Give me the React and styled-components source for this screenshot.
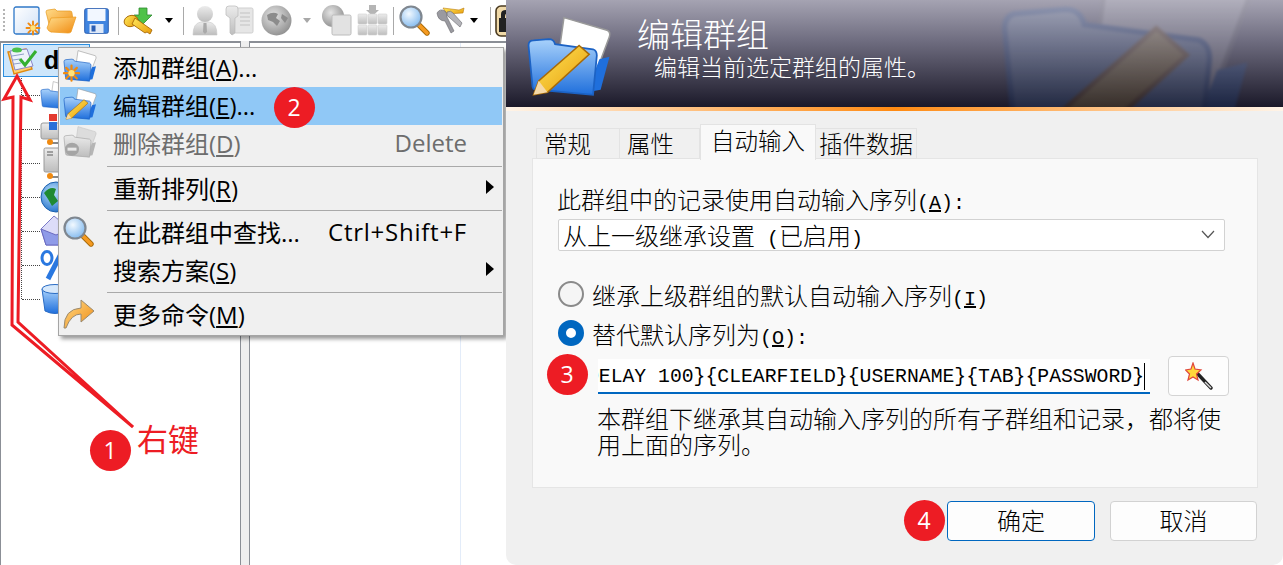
import React from "react";
import styled, { createGlobalStyle } from "styled-components";

const GlobalStyle = createGlobalStyle`
  html, body {
    margin: 0;
    padding: 0;
    background: #fff;
  }
  * {
    box-sizing: border-box;
  }
`;

const Page = styled.div`
  position: relative;
  display: flex;
  width: 1283px;
  height: 565px;
  overflow: hidden;
  background: #fff;
  font-family: "Noto Sans CJK SC", sans-serif;
  color: #000;
`;

/* left: main window */
const MainWindow = styled.div`
  position: relative;
  display: flex;
  flex-direction: column;
  width: 506px;
  flex: none;
  overflow: hidden;
`;

const Toolbar = styled.div`
  display: flex;
  align-items: center;
  height: 41px;
  flex: none;
  padding-left: 3px;
  background: #fff;
`;

const Grip = styled.div`
  width: 4px;
  height: 24px;
  background: repeating-linear-gradient(to bottom, #b5b5b5 0 2px, transparent 2px 4px);
`;

const ToolSlot = styled.div`
  display: flex;
  flex: none;
  margin-left: ${(p) => p.$gap}px;
`;

const ToolSep = styled.div`
  width: 1px;
  height: 28px;
  flex: none;
  margin-left: ${(p) => p.$gap}px;
  background: #a9a9a9;
`;

const DropTri = styled.div`
  flex: none;
  width: 0;
  height: 0;
  margin-left: ${(p) => p.$gap}px;
  border-left: 4.5px solid transparent;
  border-right: 4.5px solid transparent;
  border-top: 5px solid ${(p) => (p.$off ? "#a8a8a8" : "#000")};
`;

const Panes = styled.div`
  display: flex;
  flex: 1;
  min-height: 0;
`;

const TreePane = styled.div`
  width: 241px;
  flex: none;
  border-top: 2px solid #8b8f96;
  border-left: 1px solid #8b8f96;
  border-right: 1px solid #8b8f96;
  padding: 1px 0 0 2px;
  background: #fff;
`;

const Splitter = styled.div`
  width: 8px;
  flex: none;
  background: #efefef;
`;

const ListPane = styled.div`
  flex: 1;
  display: flex;
  border-top: 2px solid #8b8f96;
  border-left: 1px solid #8b8f96;
  background: #fff;
`;

const ListColumn = styled.div`
  width: 211px;
  flex: none;
  border-right: 1px solid #e3ecf9;
`;

const RootRow = styled.div`
  display: flex;
  align-items: center;
  gap: 6px;
  width: 87px;
  height: 33px;
  padding-left: 2px;
  border: 1px solid #2d8fe0;
  background: #cde6fb;
  font-size: 25px;
  font-weight: 700;
  font-family: "Liberation Sans", sans-serif;
`;

const TreeList = styled.div`
  height: 221px;
  margin: 1px 0 0 18px;
  border-left: 1px dotted #444;
`;

const TreeRow = styled.div`
  display: flex;
  align-items: center;
  height: 34px;
  &::before {
    content: "";
    width: 18px;
    flex: none;
    border-top: 1px dotted #444;
  }
`;

/* context menu */
const Menu = styled.div`
  position: absolute;
  left: 58px;
  top: 47px;
  width: 446px;
  padding: 1px;
  border: 1px solid #a5a5a5;
  background: #f0f0f0;
  box-shadow: 3px 3px 4px rgba(0, 0, 0, 0.4);
  font-family: "Open Sans", "Noto Sans CJK SC", sans-serif;
  font-size: 24px;
`;

const MenuRow = styled.div`
  display: flex;
  align-items: center;
  height: 38px;
  padding: 0 8px 4px 3px;
  background: ${(p) => (p.$active ? "#90c8f6" : "transparent")};
  color: ${(p) => (p.$off ? "#6d6d6d" : "#000")};
`;

const MenuIcon = styled.div`
  display: flex;
  width: 50px;
  flex: none;
`;

const MenuLabel = styled.span`
  flex: 1;
  white-space: nowrap;
`;

const Shortcut = styled.span`
  margin-right: 27px;
  letter-spacing: ${(p) => (p.$wide ? 0.75 : 0)}px;
  white-space: nowrap;
`;

const SubArrow = styled.span`
  width: 0;
  height: 0;
  border-top: 7px solid transparent;
  border-bottom: 7px solid transparent;
  border-left: 8px solid #000;
`;

const MenuSep = styled.div`
  height: 1px;
  margin: ${(p) => p.$top}px 0 ${(p) => p.$bottom}px 47px;
  background: #a9a9a9;
`;

/* annotations */
const Annotation = styled.svg`
  position: absolute;
  left: 0;
  top: 0;
  pointer-events: none;
`;

const Badge = styled.div`
  position: absolute;
  left: ${(p) => p.$x - 20.5}px;
  top: ${(p) => p.$y - 20.5}px;
  width: 41px;
  height: 41px;
  display: flex;
  align-items: center;
  justify-content: center;
  border-radius: 50%;
  background: #ed1c24;
  color: #fff;
  font-family: "Open Sans", sans-serif;
  font-size: 23px;
`;

const RedNote = styled.div`
  position: absolute;
  left: 137px;
  top: 416px;
  color: #ed1c24;
  font-size: 31px;
  line-height: 44px;
`;

/* right: dialog */
const Dialog = styled.div`
  display: flex;
  flex-direction: column;
  flex: 1;
  overflow: hidden;
  border-radius: 0 0 10px 10px;
  background: #f0f0f0;
  font-size: 24px;
  font-weight: 300;
`;

const Banner = styled.div`
  position: relative;
  display: flex;
  height: 107px;
  flex: none;
  overflow: hidden;
  padding: 16px 0 0 20px;
  background: linear-gradient(to bottom, #a5a3b2 0%, #6f6d80 38%, #1b1929 100%);
  color: #fff;
`;

const BannerGhost = styled.div`
  position: absolute;
  left: 491px;
  top: -60px;
  opacity: 0.13;
  filter: blur(1.5px);
`;

const BannerText = styled.div`
  position: relative;
  margin-left: 25px;
`;

const BannerTitle = styled.div`
  font-size: 33px;
  line-height: 34px;
`;

const BannerSub = styled.div`
  margin-left: 17px;
  font-size: 23px;
  line-height: 32px;
`;

const GlowLine = styled.div`
  height: 4px;
  flex: none;
  background: linear-gradient(to right, #fff4e8 0%, #ff8a12 50%, #fff4e8 100%);
`;

const DialogBody = styled.div`
  display: flex;
  flex-direction: column;
  padding: 13px 25px 0 26px;
`;

const TabStrip = styled.div`
  position: relative;
  display: flex;
  align-items: flex-end;
  height: 35px;
  padding-left: 4px;
  margin-bottom: -1px;
  font-size: 23.5px;
  z-index: 1;
`;

const Tab = styled.div`
  width: ${(p) => p.$w}px;
  height: ${(p) => (p.$active ? 36 : 31)}px;
  flex: none;
  padding-left: ${(p) => p.$pad}px;
  border: 1px solid #e3e3e3;
  border-bottom: ${(p) => (p.$active ? "none" : "1px solid #e3e3e3")};
  border-left: ${(p) => (p.$first || p.$active ? "1px solid #e3e3e3" : "none")};
  background: ${(p) => (p.$active ? "#f9f9f9" : "#f0f0f0")};
  margin-bottom: ${(p) => (p.$active ? -1 : 0)}px;
  line-height: ${(p) => (p.$active ? 30 : 28)}px;
  white-space: nowrap;
`;

const TabPanel = styled.div`
  height: 330px;
  padding: 28px 0 0 24px;
  border: 1px solid #e5e5e5;
  background: #f9f9f9;
`;

const Half = styled.span`
  font-family: "Liberation Mono", monospace;
  font-size: 20px;
  line-height: 1;
`;

const FieldLabel = styled.div`
  height: 26px;
  line-height: 24px;
  white-space: nowrap;
`;

const Select = styled.div`
  display: flex;
  align-items: center;
  justify-content: space-between;
  width: 667px;
  height: 32px;
  margin: 6px 0 0 1px;
  padding: 0 9px 2px 4px;
  border: 1px solid #d2d2d2;
  border-radius: 2px;
  background: #fff;
  white-space: nowrap;
`;

const RadioRow = styled.div`
  display: flex;
  align-items: center;
  gap: 8px;
  height: 26px;
  margin: ${(p) => p.$top}px 0 0 1px;
  white-space: nowrap;
`;

const Radio = styled.span`
  width: 26px;
  height: 26px;
  flex: none;
  border-radius: 50%;
  border: ${(p) => (p.$on ? "8px solid #0067c0" : "2px solid #8a8a8a")};
  background: ${(p) => (p.$on ? "#fff" : "#f5f5f5")};
`;

const SequenceRow = styled.div`
  display: flex;
  align-items: center;
  gap: 18px;
  margin: 10px 0 0 41px;
`;

const SequenceInput = styled.div`
  display: flex;
  justify-content: flex-end;
  align-items: center;
  width: 552px;
  height: 35px;
  overflow: hidden;
  padding: 3px 5px 0 0;
  border-bottom: 2px solid #0067c0;
  background: #fff;
  font-family: "Liberation Mono", monospace;
  font-size: 19.75px;
  font-weight: 400;
  white-space: nowrap;
`;

const Caret = styled.span`
  width: 1px;
  height: 27px;
  flex: none;
  background: #000;
`;

const WandButton = styled.div`
  display: flex;
  align-items: center;
  justify-content: center;
  width: 61px;
  height: 40px;
  border: 1px solid #d4d4d4;
  border-radius: 4px;
  background: #fdfdfd;
`;

const Description = styled.div`
  width: 636px;
  margin: 9px 0 0 40px;
  line-height: 26px;
`;

const Footer = styled.div`
  display: flex;
  justify-content: flex-end;
  gap: 15px;
  padding: 13px 1px 0 0;
`;

const Button = styled.div`
  display: flex;
  align-items: center;
  justify-content: center;
  width: ${(p) => p.$w}px;
  height: 40px;
  padding-bottom: 3px;
  border: 1px solid ${(p) => (p.$primary ? "#0067c0" : "#d2d2d2")};
  border-radius: 4px;
  background: #fdfdfd;
`;

/* drawings */
const Gradients = () => (
  <svg width="0" height="0" style={{ position: "absolute" }} aria-hidden>
    <defs>
      <linearGradient id="blue" x1="0" y1="0" x2="0" y2="1">
        <stop offset="0" stopColor="#a9d2fb" />
        <stop offset="1" stopColor="#1f6fdc" />
      </linearGradient>
      <linearGradient id="orange" x1="0" y1="0" x2="1" y2="1">
        <stop offset="0" stopColor="#ffdc8a" />
        <stop offset="1" stopColor="#f08a10" />
      </linearGradient>
      <linearGradient id="gold" x1="0" y1="0" x2="1" y2="1">
        <stop offset="0" stopColor="#ffe95c" />
        <stop offset="1" stopColor="#e89a08" />
      </linearGradient>
      <linearGradient id="grey" x1="0" y1="0" x2="0" y2="1">
        <stop offset="0" stopColor="#ececec" />
        <stop offset="1" stopColor="#bdbdbd" />
      </linearGradient>
      <linearGradient id="sheet" x1="0" y1="0" x2="1" y2="1">
        <stop offset="0" stopColor="#fff" />
        <stop offset="1" stopColor="#cfe0f6" />
      </linearGradient>
      <radialGradient id="lens" cx="0.4" cy="0.35" r="0.7">
        <stop offset="0" stopColor="#f2f9ff" />
        <stop offset="1" stopColor="#7fb8ee" />
      </radialGradient>
      <radialGradient id="ball" cx="0.4" cy="0.35" r="0.7">
        <stop offset="0" stopColor="#e4e4e4" />
        <stop offset="1" stopColor="#8e8e8e" />
      </radialGradient>
      <radialGradient id="earth" cx="0.4" cy="0.35" r="0.7">
        <stop offset="0" stopColor="#bfe3ff" />
        <stop offset="1" stopColor="#1f6fc8" />
      </radialGradient>
    </defs>
  </svg>
);

const Burst = ({ x, y, r }) => (
  <g stroke="#f08a10" strokeWidth={r / 3.4} strokeLinecap="round">
    {[0, 45, 90, 135].map((a) => (
      <line key={a} x1={x - r} y1={y} x2={x + r} y2={y} transform={`rotate(${a} ${x} ${y})`} />
    ))}
    <circle cx={x} cy={y} r={r / 2.4} fill="#ffe27a" stroke="none" />
  </g>
);

const FolderIcon = ({ size = 34, variant }) => {
  const off = variant === "delete";
  return (
    <svg width={size} height={size * 0.95} viewBox="0 0 34 32">
      <path
        d="M15 0.5 L32 5.5 Q33.5 6 33 8 L27 24 L12 22 Z"
        fill={off ? "#dcdcdc" : "#fff"}
        stroke={off ? "#c4c4c4" : "#9a9a9a"}
        strokeWidth=".6"
      />
      <path d="M29 17 L33 16 L29.5 29 L24 30 Z" fill={off ? "#b5b5b5" : "#1f6fdc"} />
      <path
        d="M1 11.5 Q1 9.5 3 9.5 L9 9 Q11 9 11.5 11 L26.5 13 Q28 13.5 28 15.5 L26.5 31 L4 29 Q2.5 29 2.5 27 Z"
        fill={off ? "url(#grey)" : "url(#blue)"}
        stroke={off ? "#a9a9a9" : "#1c62c4"}
        strokeWidth=".7"
      />
      {variant === "new" && <Burst x={8.5} y={23} r={7.5} />}
      {variant === "edit" && (
        <g>
          <path d="M21 11.5 L25 15 L8.5 30 L3 31 L5 25.5 Z" fill="url(#gold)" stroke="#a86a08" strokeWidth=".6" />
          <path d="M5 25.5 L8.5 30 L3 31 Z" fill="#f5d9a8" />
        </g>
      )}
      {off && (
        <g>
          <ellipse cx="9" cy="23" rx="7" ry="6.5" fill="#a5a5a5" />
          <rect x="4.5" y="21.5" width="9" height="3" fill="#e8e8e8" />
        </g>
      )}
    </svg>
  );
};

const RootIcon = () => (
  <svg width="32" height="30" viewBox="0 0 32 30">
    <path d="M2 6 L20 3 L26 23 L8 28 Z" fill="#ffcf70" stroke="#e08a10" strokeWidth="1.4" />
    <path d="M4 5 L21 3 L27 20 L9 24 Z" fill="#eef2fb" stroke="#8a86c8" strokeWidth="1" />
    <path d="M6 10 L18 8 M7 14 L14 13 M8 18 L15 17" stroke="#8fa0c8" strokeWidth="1" />
    <ellipse cx="11" cy="4" rx="5" ry="2.5" fill="#4cc24a" />
    <path d="M14 13 L19 19 L30 5" fill="none" stroke="#35b030" strokeWidth="3" />
  </svg>
);

const NewFileIcon = () => (
  <svg width="28" height="30" viewBox="0 0 28 30">
    <rect x="1" y="1" width="25" height="27" rx="2" fill="url(#sheet)" stroke="#2f78c8" strokeWidth="1.3" />
    <Burst x={20} y={22} r={6.5} />
  </svg>
);

const OpenFolderIcon = () => (
  <svg width="32" height="26" viewBox="0 0 32 26">
    <path d="M1 4 Q1 2 3 2 L10 1 L12 3 L25 3 Q27 3 27 5 L28 12 L6 24 Z" fill="url(#orange)" stroke="#e49a20" strokeWidth=".7" />
    <path d="M6 10 L31 9 L26 24 Q25 25 23 25 L6 24 Q3 23 2 20 Z" fill="url(#orange)" stroke="#ec9a1c" strokeWidth=".7" />
  </svg>
);

const FloppyIcon = () => (
  <svg width="25" height="26" viewBox="0 0 25 26">
    <rect x=".7" y=".7" width="23.6" height="24.6" rx="1.6" fill="#3f84e0" stroke="#2d5fb0" />
    <rect x="3.5" y="1" width="18" height="12" fill="#f2f7ff" />
    <rect x="5.5" y="16" width="14" height="9" fill="#dfe9f8" />
    <rect x="7.5" y="17.5" width="4" height="6" fill="#2b5fb4" />
  </svg>
);

const KeyArrowIcon = () => (
  <svg width="31" height="28" viewBox="0 0 31 28">
    <path d="M16 1 H24 V8 H29 L20 17 L11 8 H16 Z" fill="#4fc248" stroke="#2d8a30" strokeWidth=".8" />
    <ellipse cx="8" cy="14" rx="7" ry="5.5" fill="url(#gold)" stroke="#a86a08" strokeWidth=".9" transform="rotate(-18 8 14)" />
    <path d="M12 11 L29 23 L27 27 L24 25 L22 26 L9 17 Z" fill="url(#gold)" stroke="#a86a08" strokeWidth=".9" />
  </svg>
);

const GreyUserIcon = () => (
  <svg width="26" height="31" viewBox="0 0 26 31">
    <circle cx="13" cy="9" r="8" fill="url(#grey)" />
    <path d="M1 30 Q1 18 9 17 L17 17 Q25 18 25 30 Z" fill="url(#grey)" stroke="#c8c8c8" strokeWidth=".6" />
    <path d="M11.5 18 H14.5 L15 27 L13 29 L11 27 Z" fill="#a9a9a9" />
  </svg>
);

const GreyKeyDocIcon = () => (
  <svg width="29" height="31" viewBox="0 0 29 31">
    <rect x="9" y="3" width="19" height="25" rx="1.5" fill="#e6e6e6" stroke="#cfcfcf" />
    <path d="M15 8 H25 M15 12 H25 M15 16 H25 M15 20 H25" stroke="#c2c2c2" />
    <path d="M1 4 Q1 1 4 1 L10 1 Q13 1 13 4 V11 L10 13 V28 L7 30 L5 28 V13 L1 10 Z" fill="url(#grey)" stroke="#b9b9b9" strokeWidth=".7" />
  </svg>
);

const GreyGlobeIcon = () => (
  <svg width="31" height="31" viewBox="0 0 31 31">
    <circle cx="15.5" cy="15.5" r="15" fill="url(#ball)" />
    <path d="M6 10 Q12 6 17 9 L15 13 L19 16 L16 21 L12 17 L7 15 Z M21 9 L27 13 L24 18 L20 13 Z" fill="#8c8c8c" />
  </svg>
);

const GreyGlobeSquareIcon = () => (
  <svg width="31" height="31" viewBox="0 0 31 31">
    <circle cx="12" cy="11" r="11" fill="url(#ball)" />
    <rect x="11" y="10" width="19" height="20" rx="1.5" fill="#e2e2e2" stroke="#bcbcbc" />
  </svg>
);

const GreyKeyboardIcon = () => (
  <svg width="31" height="32" viewBox="0 0 31 32">
    <path d="M12 0 H19 V5 H22 L15.5 11 L9 5 H12 Z" fill="#b5b5b5" />
    {[0, 1, 2].map((c) =>
      [0, 1].map((r) => (
        <rect key={`${c}${r}`} x={1 + c * 10} y={9 + r * 11} width="9" height="10" rx="1" fill="url(#grey)" stroke="#d0d0d0" strokeWidth=".6" />
      ))
    )}
  </svg>
);

const SearchIcon = ({ size = 31 }) => (
  <svg width={size} height={size} viewBox="0 0 31 31">
    <path d="M19 19 L28 28" stroke="#a86a08" strokeWidth="5.4" strokeLinecap="round" />
    <path d="M19.5 19.5 L28 28" stroke="#f59a20" strokeWidth="3.6" strokeLinecap="round" />
    <circle cx="12" cy="12" r="10.5" fill="url(#lens)" stroke="#7f8790" strokeWidth="2.2" />
  </svg>
);

const KeysIcon = () => (
  <svg width="30" height="31" viewBox="0 0 30 31">
    <path d="M8 3 L24 5 L29 3 L28 8 L12 9 Z" fill="url(#gold)" stroke="#b87a10" strokeWidth=".6" />
    <path d="M2 8 Q5 3 10 6 Q13 9 12 12 L19 26 L16 28 L10 16 Q3 16 2 8 Z" fill="#9a9aa0" stroke="#66666c" strokeWidth=".6" />
    <path d="M12 7 Q16 5 18 8 L27 18 L25 22 L15 13 Q11 11 12 7 Z" fill="#b5b5ba" stroke="#66666c" strokeWidth=".6" />
  </svg>
);

const LockIcon = () => (
  <svg width="11" height="32" viewBox="0 0 11 32">
    <rect x="1" y="1" width="20" height="30" rx="5" fill="#f0d9a8" stroke="#4a3a20" strokeWidth="1.6" />
    <path d="M6 13 V9 Q6 5 11 5 V9 Q10 9 10 13 Z" fill="#222" />
    <rect x="4" y="13" width="10" height="14" fill="#222" />
  </svg>
);

const WindowsBoxIcon = () => (
  <svg width="30" height="32" viewBox="0 0 30 32">
    <rect x="1" y="10" width="26" height="16" rx="2" fill="url(#grey)" stroke="#9a9a9a" />
    <rect x="9" y="1" width="8" height="7" fill="#e33a30" />
    <rect x="18" y="1" width="8" height="7" fill="#3eb040" />
    <rect x="9" y="9" width="8" height="8" fill="#2a70d8" />
    <rect x="18" y="9" width="8" height="8" fill="#f6c21c" />
    <path d="M10 30 H26" stroke="#888" strokeWidth="2" />
    <circle cx="10" cy="29" r="3" fill="#f08a10" />
  </svg>
);

const TowerIcon = () => (
  <svg width="30" height="32" viewBox="0 0 30 32">
    <rect x="4" y="1" width="22" height="24" rx="1.5" fill="url(#grey)" stroke="#9a9a9a" />
    <path d="M7 5 H13 M7 8 H13" stroke="#888" strokeWidth="1.5" />
    <path d="M10 30 H26" stroke="#888" strokeWidth="2" />
    <circle cx="10" cy="29" r="3" fill="#f08a10" />
  </svg>
);

const EarthIcon = () => (
  <svg width="32" height="32" viewBox="0 0 32 32">
    <circle cx="16" cy="16" r="15" fill="url(#earth)" stroke="#1a5fae" />
    <path d="M4 12 Q10 5 16 8 L14 14 L18 20 L12 25 L8 18 Z" fill="#1f8a32" />
  </svg>
);

const MailIcon = () => (
  <svg width="32" height="32" viewBox="0 0 32 32">
    <path d="M1 14 L14 1 L30 14 V30 H6 Z" fill="#dcdcf8" stroke="#7a7ac8" />
    <path d="M1 14 L16 20 L30 14 V30 H6 Z" fill="#8f9be8" stroke="#6a6ac0" />
  </svg>
);

const PercentIcon = () => (
  <svg width="32" height="32" viewBox="0 0 32 32">
    <ellipse cx="7" cy="9" rx="5" ry="6.5" fill="#fff" stroke="#2a78e0" strokeWidth="3" />
    <path d="M23 1 L8 30" stroke="#2a78e0" strokeWidth="5" />
    <ellipse cx="25" cy="23" rx="5" ry="6.5" fill="#fff" stroke="#2a78e0" strokeWidth="3" />
  </svg>
);

const BinIcon = () => (
  <svg width="30" height="32" viewBox="0 0 30 32">
    <path d="M2 6 L5 28 Q15 33 25 28 L28 6 Z" fill="url(#blue)" stroke="#2a6cc4" />
    <ellipse cx="15" cy="6" rx="13" ry="4.5" fill="#d6e8fb" stroke="#2a6cc4" />
  </svg>
);

const CurveArrowIcon = () => (
  <svg width="32" height="32" viewBox="0 0 32 32">
    <path d="M1 31 Q1 12 18 11 V3 L31 14 L18 25 V17 Q8 17 3 31 Z" fill="url(#orange)" stroke="#9a8a70" strokeWidth="1" />
  </svg>
);

const WandIcon = () => (
  <svg width="28" height="28" viewBox="0 0 28 28">
    <path d="M11 10 L26 26" stroke="#222" strokeWidth="3.4" strokeLinecap="round" />
    <path d="M20 20 L26 26" stroke="#ddd" strokeWidth="1.4" />
    <path d="M8 1 L10 7 L16 8 L11.5 12 L13 18 L8 15 L3 18 L4.5 12 L0.5 8 L6 7 Z" fill="#ffd83a" stroke="#e0463a" strokeWidth="1.2" />
  </svg>
);

const Chevron = () => (
  <svg width="14" height="9" viewBox="0 0 14 9">
    <path d="M1 1 L7 7.5 L13 1" fill="none" stroke="#555" strokeWidth="1.2" />
  </svg>
);

const SEQUENCE = "{DELAY 100}{CLEARFIELD}{USERNAME}{TAB}{PASSWORD}";

const App = () => (
  <Page>
    <GlobalStyle />
    <Gradients />
    <MainWindow>
      <Toolbar>
        <Grip />
        <ToolSlot $gap={8}><NewFileIcon /></ToolSlot>
        <ToolSlot $gap={4}><OpenFolderIcon /></ToolSlot>
        <ToolSlot $gap={7}><FloppyIcon /></ToolSlot>
        <ToolSep $gap={9} />
        <ToolSlot $gap={4}><KeyArrowIcon /></ToolSlot>
        <DropTri $gap={11} />
        <ToolSep $gap={10} />
        <ToolSlot $gap={8}><GreyUserIcon /></ToolSlot>
        <ToolSlot $gap={7}><GreyKeyDocIcon /></ToolSlot>
        <ToolSlot $gap={7}><GreyGlobeIcon /></ToolSlot>
        <DropTri $gap={11} $off />
        <ToolSlot $gap={10}><GreyGlobeSquareIcon /></ToolSlot>
        <ToolSlot $gap={5}><GreyKeyboardIcon /></ToolSlot>
        <ToolSep $gap={5} />
        <ToolSlot $gap={5}><SearchIcon /></ToolSlot>
        <ToolSlot $gap={5}><KeysIcon /></ToolSlot>
        <DropTri $gap={5} />
        <ToolSep $gap={12} />
        <ToolSlot $gap={4}><LockIcon /></ToolSlot>
      </Toolbar>
      <Panes>
        <TreePane>
          <RootRow><RootIcon />d</RootRow>
          <TreeList>
            <TreeRow><FolderIcon size={30} /></TreeRow>
            <TreeRow><WindowsBoxIcon /></TreeRow>
            <TreeRow><TowerIcon /></TreeRow>
            <TreeRow><EarthIcon /></TreeRow>
            <TreeRow><MailIcon /></TreeRow>
            <TreeRow><PercentIcon /></TreeRow>
            <TreeRow><BinIcon /></TreeRow>
          </TreeList>
        </TreePane>
        <Splitter />
        <ListPane>
          <ListColumn />
        </ListPane>
      </Panes>
      <Annotation width="140" height="432" viewBox="0 0 140 432">
        <path
          d="M17 76 L30 100 L21 97 L18 322 L133 427 L12 325 L13 97 L4 99 Z"
          fill="none"
          stroke="#ed1c24"
          strokeWidth="3"
        />
      </Annotation>
      <Menu>
        <MenuRow>
          <MenuIcon><FolderIcon variant="new" /></MenuIcon>
          <MenuLabel>添加群组(<u>A</u>)...</MenuLabel>
        </MenuRow>
        <MenuRow $active>
          <MenuIcon><FolderIcon variant="edit" /></MenuIcon>
          <MenuLabel>编辑群组(<u>E</u>)...</MenuLabel>
        </MenuRow>
        <MenuRow $off>
          <MenuIcon><FolderIcon variant="delete" /></MenuIcon>
          <MenuLabel>删除群组(<u>D</u>)</MenuLabel>
          <Shortcut>Delete</Shortcut>
        </MenuRow>
        <MenuSep $top={3} $bottom={3} />
        <MenuRow>
          <MenuIcon />
          <MenuLabel>重新排列(<u>R</u>)</MenuLabel>
          <SubArrow />
        </MenuRow>
        <MenuSep $top={2} $bottom={3} />
        <MenuRow>
          <MenuIcon><SearchIcon size={31} /></MenuIcon>
          <MenuLabel>在此群组中查找...</MenuLabel>
          <Shortcut $wide>Ctrl+Shift+F</Shortcut>
        </MenuRow>
        <MenuRow>
          <MenuIcon />
          <MenuLabel>搜索方案(<u>S</u>)</MenuLabel>
          <SubArrow />
        </MenuRow>
        <MenuSep $top={2} $bottom={3} />
        <MenuRow>
          <MenuIcon><CurveArrowIcon /></MenuIcon>
          <MenuLabel>更多命令(<u>M</u>)</MenuLabel>
        </MenuRow>
      </Menu>
    </MainWindow>

    <Dialog>
      <Banner>
        <FolderIcon size={86} variant="edit" />
        <BannerGhost><FolderIcon size={258} variant="edit" /></BannerGhost>
        <BannerText>
          <BannerTitle>编辑群组</BannerTitle>
          <BannerSub>编辑当前选定群组的属性。</BannerSub>
        </BannerText>
      </Banner>
      <GlowLine />
      <DialogBody>
        <TabStrip>
          <Tab $w={84} $pad={7} $first>常规</Tab>
          <Tab $w={80} $pad={7}>属性</Tab>
          <Tab $w={116} $pad={10} $active>自动输入</Tab>
          <Tab $w={101} $pad={3}>插件数据</Tab>
        </TabStrip>
        <TabPanel>
          <FieldLabel>此群组中的记录使用自动输入序列<Half>(<u>A</u>):</Half></FieldLabel>
          <Select>
            <span>从上一级继承设置<Half> (</Half>已启用<Half>)</Half></span>
            <Chevron />
          </Select>
          <RadioRow $top={30}>
            <Radio />
            <span>继承上级群组的默认自动输入序列<Half>(<u>I</u>)</Half></span>
          </RadioRow>
          <RadioRow $top={13}>
            <Radio $on />
            <span>替代默认序列为<Half>(<u>O</u>):</Half></span>
          </RadioRow>
          <SequenceRow>
            <SequenceInput>{SEQUENCE}<Caret /></SequenceInput>
            <WandButton><WandIcon /></WandButton>
          </SequenceRow>
          <Description>本群组下继承其自动输入序列的所有子群组和记录，都将使用上面的序列。</Description>
        </TabPanel>
        <Footer>
          <Button $w={148} $primary>确定</Button>
          <Button $w={147}>取消</Button>
        </Footer>
      </DialogBody>
    </Dialog>

    <Badge $x={110} $y={450}>1</Badge>
    <Badge $x={294} $y={107}>2</Badge>
    <Badge $x={567} $y={374}>3</Badge>
    <Badge $x={924} $y={520}>4</Badge>
    <RedNote>右键</RedNote>
  </Page>
);

export default App;
